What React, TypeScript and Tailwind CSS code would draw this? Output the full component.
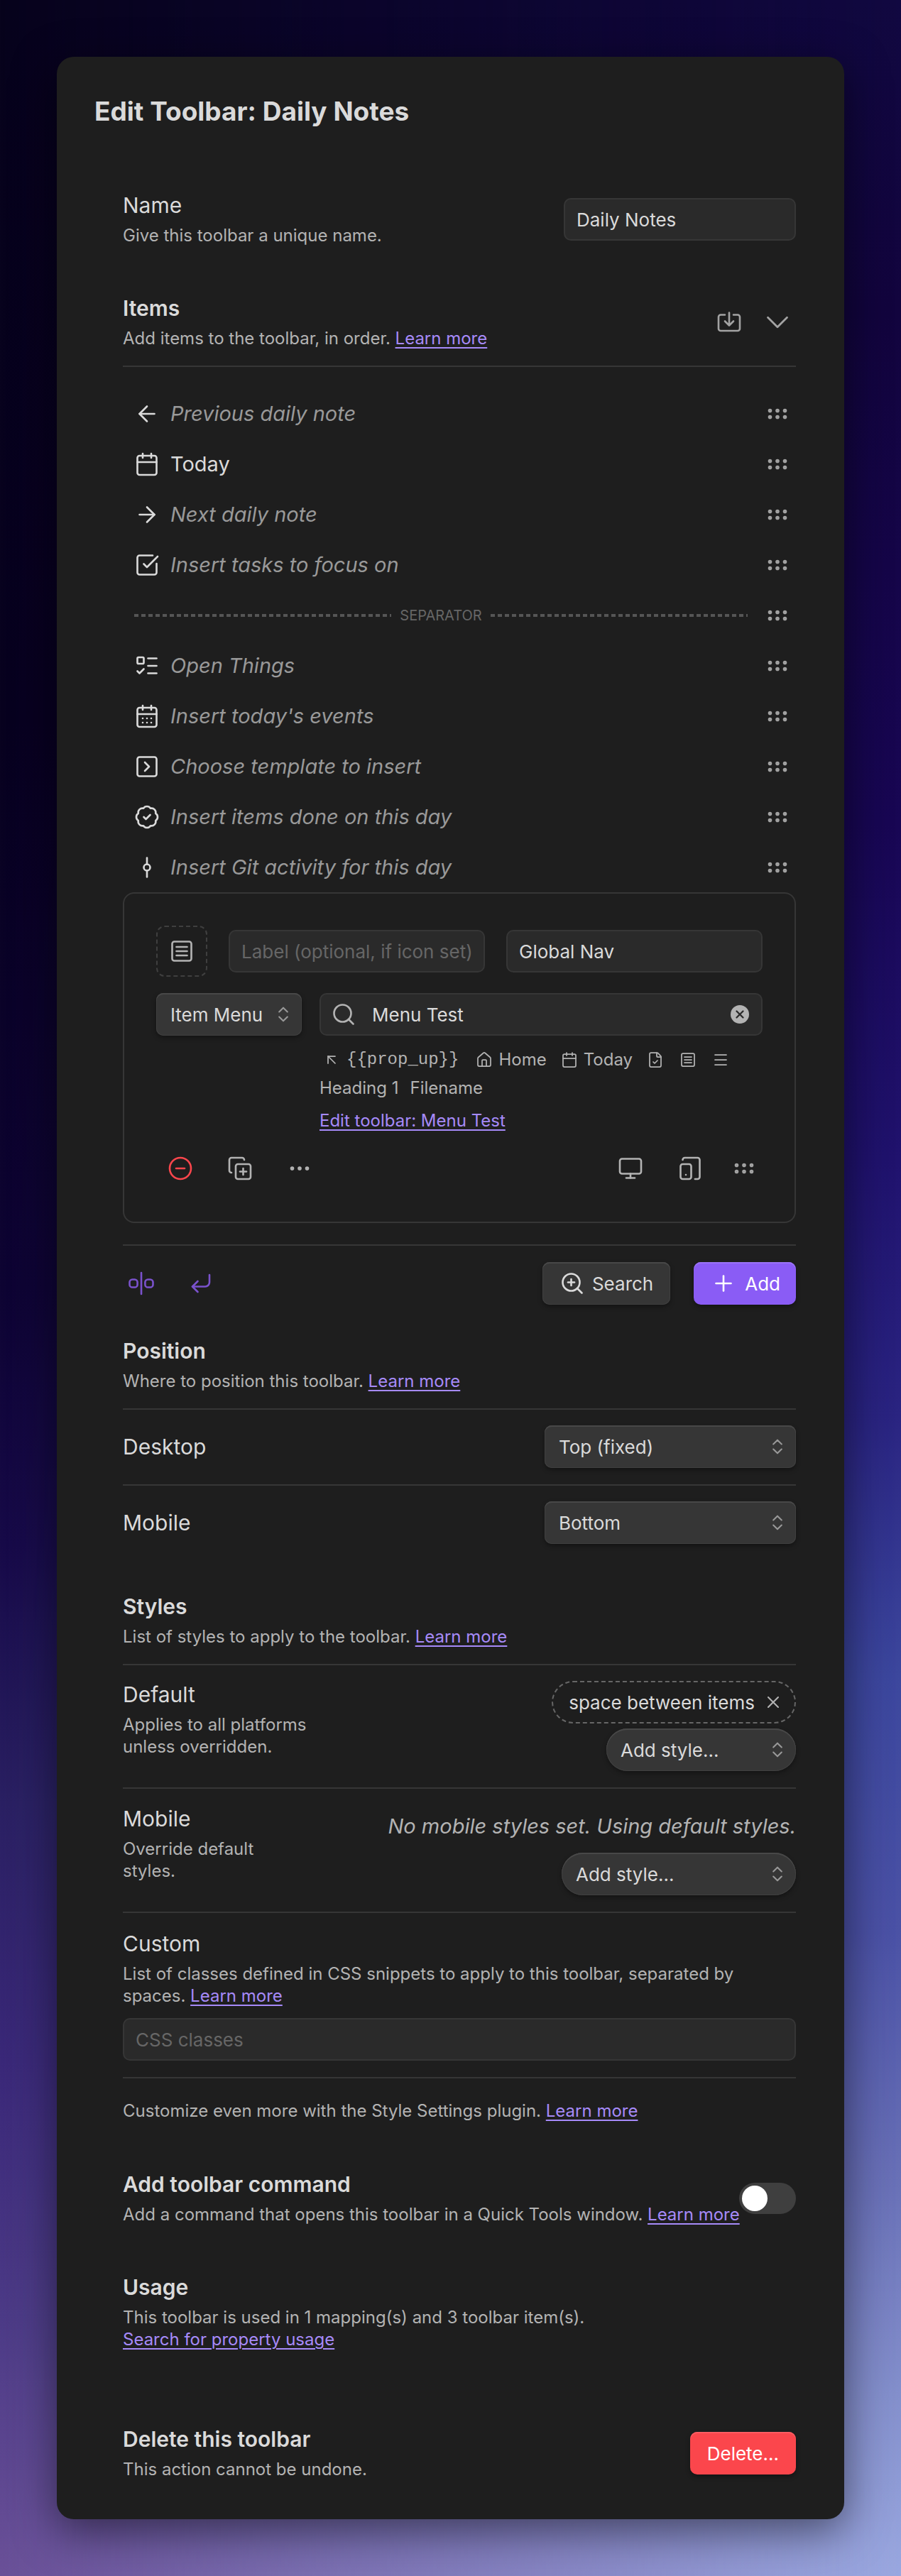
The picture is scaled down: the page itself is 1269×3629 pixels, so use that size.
import { useState, type ReactNode } from "react";
import {
  ArrowLeft, ArrowRight, ArrowUpLeft, BadgeCheck, Calendar, CalendarDays, ChevronDown, ChevronsUpDown, CircleMinus,
  CopyPlus, CornerDownLeft, Ellipsis, FileCheck, GitCommitVertical, GripHorizontal, House,
  ListTodo, Menu, Monitor, Plus, Search, SquareCheckBig, SquareChevronRight, X, ZoomIn,
  type LucideIcon,
} from "lucide-react";

const SW = 1.75;

function SquareLines({ className }: { className?: string }) {
  return (
    <svg viewBox="0 0 24 24" fill="none" stroke="currentColor" strokeWidth={SW} strokeLinecap="round" strokeLinejoin="round" className={className} aria-hidden="true">
      <rect x="3" y="3" width="18" height="18" rx="2" />
      <path d="M7 8h10M7 12h10M7 16h10" />
    </svg>
  );
}

function ImportIcon() {
  return (
    <svg viewBox="0 0 24 24" fill="none" stroke="currentColor" strokeWidth={SW} strokeLinecap="round" strokeLinejoin="round" className="size-9" aria-hidden="true">
      <path d="M12 3v12M8 11l4 4 4-4" />
      <path d="M8 5H4a2 2 0 0 0-2 2v11a2 2 0 0 0 2 2h16a2 2 0 0 0 2-2V7a2 2 0 0 0-2-2h-4" />
    </svg>
  );
}

function SeparatorIcon() {
  return (
    <svg viewBox="0 0 24 24" fill="none" stroke="currentColor" strokeWidth={SW} strokeLinecap="round" strokeLinejoin="round" className="size-9" aria-hidden="true">
      <path d="M12 2v20" />
      <rect x="1" y="8.300" width="7.400" height="7.400" rx="2.600" />
      <rect x="15.600" y="8.300" width="7.400" height="7.400" rx="2.600" />
    </svg>
  );
}

function DevicesIcon() {
  return (
    <svg viewBox="0 0 24 24" fill="none" stroke="currentColor" strokeWidth={SW} strokeLinecap="round" strokeLinejoin="round" className="size-9" aria-hidden="true">
      <rect width="10" height="14" x="3" y="8" rx="2" />
      <path d="M5 4a2 2 0 0 1 2-2h12a2 2 0 0 1 2 2v16a2 2 0 0 1-2 2h-2.400" />
      <path d="M8 18h.01" />
    </svg>
  );
}

function Learn({ children = "Learn more" }: { children?: ReactNode }) {
  return (
    <a href="#" className="text-[#a68af9] underline decoration-2 underline-offset-4">
      {children}
    </a>
  );
}

function Info({ title, bold, htmlFor, className = "", children }: { title: string; bold?: boolean; htmlFor?: string; className?: string; children?: ReactNode }) {
  const Tag = bold ? "h2" : htmlFor ? "label" : "h3";
  return (
    <div className={className}>
      <Tag {...(htmlFor ? { htmlFor } : {})} className={`block text-[30px] leading-[39px] text-[#dadada] ${bold ? "font-semibold" : ""}`}>
        {title}
      </Tag>
      {children && <div className="mt-[7px] mb-px text-2xl leading-[31px] text-[#b3b3b3]">{children}</div>}
    </div>
  );
}

const inputClass =
  "h-[60px] min-w-0 rounded-[10px] border-2 border-[#363636] bg-[#2a2a2a] px-4 text-[26px] text-[#dadada] placeholder:text-[#666] outline-none";
const raised = "shadow-[inset_0_2px_0_#484848,inset_0_0_0_1px_#404040,0_3px_6px_rgba(0,0,0,0.35)]";

function Select({ id, label, options, className = "", round = "rounded-[10px]" }: { id?: string; label?: string; options: string[]; className?: string; round?: string }) {
  return (
    <span className={`relative block ${className}`}>
      <select id={id} aria-label={label} className={`block h-[60px] w-full appearance-none bg-[#363636] pr-12 pl-5 text-[26px] text-[#dadada] outline-none ${round} ${raised}`}>
        {options.map((o) => (
          <option key={o}>{o}</option>
        ))}
      </select>
      <ChevronsUpDown strokeWidth={1.75} className="pointer-events-none absolute top-4 right-3 size-7 text-[#999]" aria-hidden="true" />
    </span>
  );
}

function IconButton({ label, className = "px-4", children }: { label: string; className?: string; children: ReactNode }) {
  return (
    <button type="button" aria-label={label} className={`flex h-[52px] items-center ${className}`}>
      {children}
    </button>
  );
}

const Grip = () => (
  <IconButton label="Drag to rearrange" className="px-2 text-[#a3a3a3]">
    <GripHorizontal strokeWidth={SW} className="size-9" />
  </IconButton>
);

type Item = { icon: LucideIcon; text: string; plain?: boolean };
const before: Item[] = [
  { icon: ArrowLeft, text: "Previous daily note" },
  { icon: Calendar, text: "Today", plain: true },
  { icon: ArrowRight, text: "Next daily note" },
  { icon: SquareCheckBig, text: "Insert tasks to focus on" },
];
const after: Item[] = [
  { icon: ListTodo, text: "Open Things" },
  { icon: CalendarDays, text: "Insert today's events" },
  { icon: SquareChevronRight, text: "Choose template to insert" },
  { icon: BadgeCheck, text: "Insert items done on this day" },
  { icon: GitCommitVertical, text: "Insert Git activity for this day" },
];

function ItemRow({ icon: Icon, text, plain }: Item) {
  return (
    <li className="flex h-[71px] items-center pl-4">
      <Icon strokeWidth={SW} className="size-9 text-[#dadada]" />
      <span className={`ml-[15px] flex-1 text-[29px] ${plain ? "text-[#dadada]" : "text-[#999] italic"}`}>{text}</span>
      <Grip />
    </li>
  );
}

const dash = "h-1 flex-1 bg-[repeating-linear-gradient(90deg,#555_0_6px,transparent_6px_10px)]";
const rule = "border-b-2 border-[#363636]";

export default function App() {
  const [name, setName] = useState("Daily Notes");
  const [tip, setTip] = useState("Global Nav");
  const [menu, setMenu] = useState("Menu Test");
  const [on, setOn] = useState(false);
  return (
    <div className="relative min-h-screen bg-[linear-gradient(180deg,#07031c_0%,#08021f_28%,#0e0433_50%,#170a48_60%,#2a2062_70%,#3a2878_80%,#4c3a86_90%,#6a5098_100%)] p-20 font-['Inter',sans-serif]">
      <div
        aria-hidden="true"
        className="absolute inset-0 bg-[linear-gradient(180deg,#110841_0%,#12043e_12%,#180654_32%,#20126e_45%,#2a2482_55%,#3c479e_65%,#4b52a6_75%,#6a72b8_85%,#8490cc_93%,#9aa8e0_100%)] [mask-image:linear-gradient(90deg,transparent,black)]"
      />
      <main className="relative rounded-3xl bg-[#1e1e1e] px-[53px] pt-[51px] pb-[54px] shadow-[0_16px_60px_rgba(0,0,0,0.5)]">
        <h1 className="text-[37px] leading-[52px] font-bold text-[#dadada]">Edit Toolbar: Daily Notes</h1>

        <div className="mt-[87px] pr-[15px] pl-10">
          <section className="flex items-center justify-between">
            <Info title="Name" htmlFor="name">Give this toolbar a unique name.</Info>
            <input id="name" value={name} onChange={(e) => setName(e.target.value)} className={`${inputClass} w-[327px]`} />
          </section>

          <section className="mt-[67px]">
            <div className={`flex items-center justify-between pb-[22px] ${rule}`}>
              <Info title="Items" bold>
                Add items to the toolbar, in order. <Learn />
              </Info>
              <div className="flex gap-2 text-[#a3a3a3]">
                <IconButton label="Import items"><ImportIcon /></IconButton>
                <IconButton label="Collapse items" className="px-2">
                  <ChevronDown strokeWidth={1.25} className="size-9 scale-150" />
                </IconButton>
              </div>
            </div>

            <ul className="mt-[30px]">
              {before.map((i) => <ItemRow key={i.text} {...i} />)}
              <li className="flex h-[71px] items-center pl-4">
                <span className={dash} />
                <span className="px-3 text-[20px] text-[#666]">SEPARATOR</span>
                <span className={`${dash} mr-4`} />
                <Grip />
              </li>
              {after.map((i) => <ItemRow key={i.text} {...i} />)}
            </ul>

            <div className="rounded-2xl border-2 border-[#363636] px-[45px] pt-[45px] pb-[49px]">
              <div className="flex items-center gap-[30px]">
                <button type="button" aria-label="Choose icon" className="flex size-[72px] shrink-0 items-center justify-center rounded-xl border-2 border-dashed border-[#3f3f3f] text-[#b3b3b3]">
                  <SquareLines className="size-9" />
                </button>
                <input aria-label="Label" placeholder="Label (optional, if icon set)" className={`${inputClass} flex-1`} />
                <input aria-label="Tooltip" value={tip} onChange={(e) => setTip(e.target.value)} className={`${inputClass} flex-1`} />
              </div>
              <div className="mt-[23px] flex gap-[25px]">
                <Select label="Item type" options={["Item Menu"]} className="w-[205px] shrink-0" />
                <div className="min-w-0 flex-1">
                  <div className="relative">
                    <Search strokeWidth={SW} className="absolute top-3 left-4 size-9 text-[#b3b3b3]" aria-hidden="true" />
                    <input aria-label="Toolbar" value={menu} onChange={(e) => setMenu(e.target.value)} className={`${inputClass} w-full pl-[72px]`} />
                    <button type="button" aria-label="Clear" onClick={() => setMenu("")} className="absolute top-[17px] right-[19px] flex size-[26px] items-center justify-center rounded-full bg-[#b3b3b3] text-[#2a2a2a]">
                      <X strokeWidth={3} className="size-[18px]" />
                    </button>
                  </div>
                  <div className="mt-[14px] flex flex-wrap items-center text-2xl leading-10 text-[#b3b3b3]">
                    <span className="flex items-center pl-[5px]">
                      <ArrowUpLeft strokeWidth={SW} className="size-6" />
                      <code className="ml-[9px] font-['Liberation_Mono',monospace] text-2xl leading-10">{"{{prop_up}}"}</code>
                    </span>
                    <span className="ml-6 flex items-center gap-2"><House strokeWidth={SW} className="size-6" />Home</span>
                    <span className="ml-5 flex items-center gap-2"><Calendar strokeWidth={SW} className="size-6" />Today</span>
                    <FileCheck strokeWidth={SW} className="ml-5 size-6" />
                    <SquareLines className="ml-[22px] size-6" />
                    <Menu strokeWidth={SW} className="ml-[22px] size-6" />
                    <span className="basis-full">
                      Heading 1<span className="ml-4">Filename</span>
                    </span>
                  </div>
                  <p className="mt-[10px] text-2xl leading-[31px]"><Learn>Edit toolbar: Menu Test</Learn></p>
                </div>
              </div>
              <div className="mt-[26px] flex items-center justify-between text-[#b3b3b3]">
                <div className="flex gap-4">
                  <IconButton label="Remove item" className="px-4 text-[#fb464c]"><CircleMinus strokeWidth={SW} className="size-9" /></IconButton>
                  <IconButton label="Duplicate item"><CopyPlus strokeWidth={SW} className="size-9" /></IconButton>
                  <IconButton label="More options"><Ellipsis strokeWidth={SW} className="size-9" /></IconButton>
                </div>
                <div className="flex gap-4">
                  <IconButton label="Show on desktop"><Monitor strokeWidth={SW} className="size-9" /></IconButton>
                  <IconButton label="Show on mobile"><DevicesIcon /></IconButton>
                  <Grip />
                </div>
              </div>
            </div>

            <div className={`mt-[30px] ${rule}`} />
            <div className="flex items-center justify-between pt-[23px]">
              <div className="flex gap-6 text-[#7a52cc]">
                <IconButton label="Add separator" className="px-2"><SeparatorIcon /></IconButton>
                <IconButton label="Add line break"><CornerDownLeft strokeWidth={SW} className="size-9" /></IconButton>
              </div>
              <div className="flex gap-[33px] text-[26px]">
                <button type="button" className={`flex h-[60px] items-center gap-[10px] rounded-[10px] bg-[#363636] px-6 text-[#dadada] ${raised}`}>
                  <ZoomIn strokeWidth={SW} className="size-9" />Search
                </button>
                <button type="button" className="flex h-[60px] items-center gap-3 rounded-[10px] bg-[#8a5cf5] pr-[22px] pl-6 text-white shadow-[inset_0_2px_0_#9a73f7,0_3px_6px_rgba(0,0,0,0.35)]">
                  <Plus strokeWidth={SW} className="size-9" />Add
                </button>
              </div>
            </div>
          </section>

          <section className="mt-[46px]">
            <Info title="Position" bold className={`pb-[22px] ${rule}`}>
              Where to position this toolbar. <Learn />
            </Info>
            <div className={`flex items-center justify-between pt-[22px] pb-[23px] ${rule}`}>
              <Info title="Desktop" htmlFor="desktop" />
              <Select id="desktop" options={["Top (fixed)"]} className="w-[354px]" />
            </div>
            <div className="flex items-center justify-between pt-[22px]">
              <Info title="Mobile" htmlFor="mobile" />
              <Select id="mobile" options={["Bottom"]} className="w-[354px]" />
            </div>
          </section>

          <section className="mt-[69px]">
            <Info title="Styles" bold className={`pb-[22px] ${rule}`}>
              List of styles to apply to the toolbar. <Learn />
            </Info>
            <div className={`flex justify-between pt-[22px] pb-[23px] ${rule}`}>
              <Info title="Default" htmlFor="default-style" className="w-[300px]">Applies to all platforms unless overridden.</Info>
              <div className="flex flex-col items-end gap-[7px]">
                <span className="flex h-[60px] items-center gap-3 rounded-full border-2 border-dashed border-[#666] pr-4 pl-[22px] text-[26px] text-[#dadada]">
                  space between items
                  <button type="button" aria-label="Remove style"><X strokeWidth={SW} className="size-7 text-[#b3b3b3]" /></button>
                </span>
                <Select id="default-style" options={["Add style..."]} round="rounded-full" className="w-[267px]" />
              </div>
            </div>
            <div className={`flex justify-between pt-[23px] pb-[23px] ${rule}`}>
              <Info title="Mobile" htmlFor="mobile-style" className="w-[200px]">Override default styles.</Info>
              <div className="flex flex-col items-end gap-[7px]">
                <p className="text-[29px] leading-[60px] text-[#b3b3b3] italic">No mobile styles set. Using default styles.</p>
                <Select id="mobile-style" options={["Add style..."]} round="rounded-full" className="w-[330px]" />
              </div>
            </div>
            <div className={`pt-6 pb-[23px] ${rule}`}>
              <Info title="Custom" htmlFor="classes">
                List of classes defined in CSS snippets to apply to this toolbar, separated by spaces. <Learn />
              </Info>
              <input id="classes" placeholder="CSS classes" className={`${inputClass} mt-4 block w-full`} />
            </div>
            <p className="mt-[30px] text-2xl leading-[31px] text-[#b3b3b3]">
              Customize even more with the Style Settings plugin. <Learn />
            </p>
          </section>

          <section className="mt-[69px] flex items-center justify-between">
            <Info title="Add toolbar command" bold className="min-w-0 lg:whitespace-nowrap">
              Add a command that opens this toolbar in a Quick Tools window. <Learn />
            </Info>
            <input
              type="checkbox"
              role="switch"
              aria-label="Add toolbar command"
              checked={on}
              onChange={() => setOn(!on)}
              className="h-11 w-20 shrink-0 appearance-none rounded-full bg-[#3f3f3f] p-1 before:block before:size-9 before:rounded-full before:bg-white checked:bg-[#8a5cf5] checked:before:ml-9"
            />
          </section>

          <section className="mt-[67px]">
            <Info title="Usage" bold>
              This toolbar is used in 1 mapping(s) and 3 toolbar item(s).
              <br />
              <Learn>Search for property usage</Learn>
            </Info>
          </section>

          <section className="mt-[106px] flex items-center justify-between">
            <Info title="Delete this toolbar" bold>This action cannot be undone.</Info>
            <button type="button" className="h-[60px] rounded-[10px] bg-[#fb464c] px-6 text-[26px] text-white shadow-[inset_0_2px_0_#fc5d62,0_3px_6px_rgba(0,0,0,0.35)]">
              Delete...
            </button>
          </section>
        </div>
      </main>
    </div>
  );
}
